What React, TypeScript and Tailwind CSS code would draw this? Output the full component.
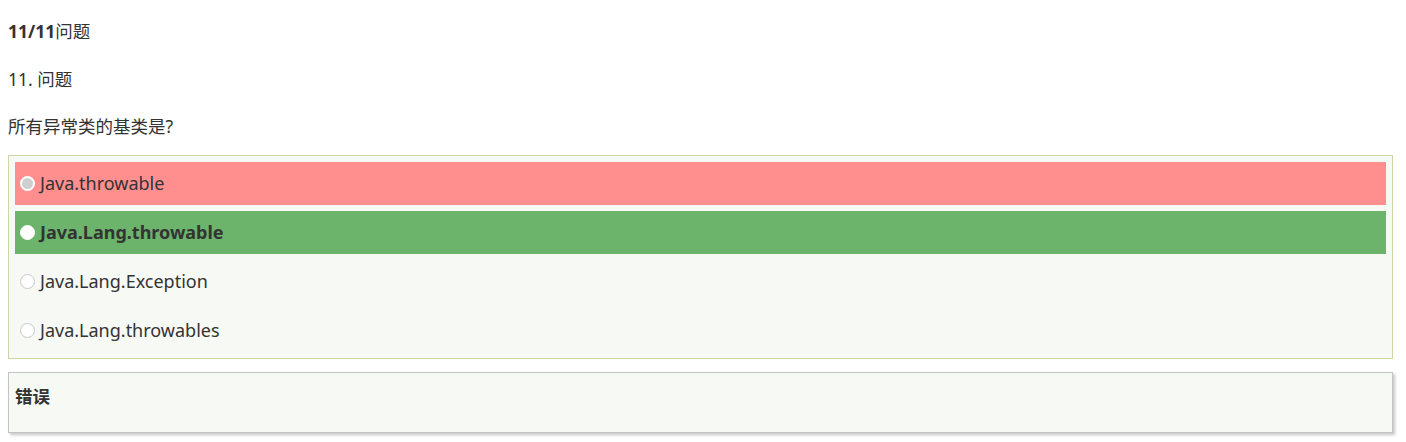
import React from "react";

const options = [
  { label: "Java.throwable", state: "wrong" },
  { label: "Java.Lang.throwable", state: "correct" },
  { label: "Java.Lang.Exception", state: "none" },
  { label: "Java.Lang.throwables", state: "none" },
];

function Radio({ state }: { state: string }) {
  if (state === "wrong")
    return <span className="inline-block w-[15px] h-[15px] rounded-full bg-[#cfcfcf] border-2 border-white shrink-0" />;
  if (state === "correct")
    return <span className="inline-block w-[15px] h-[15px] rounded-full bg-white border border-white shrink-0" />;
  return <span className="inline-block w-[15px] h-[15px] rounded-full bg-white border border-[#c8c8c8] shrink-0" />;
}

export default function App() {
  return (
    <div
      className="bg-white text-[#333] pl-2 pr-[13px] pt-[19px] pb-[9px]"
      style={{ fontFamily: "'Noto Sans', 'Noto Sans CJK SC', sans-serif" }}
    >
      <p className="text-[17.5px] leading-[24px] h-[24px]"><b>11/11</b>问题</p>
      <p className="text-[17.5px] leading-[24px] h-[24px] mt-[24px]">11. 问题</p>
      <p className="text-[17.5px] leading-[24px] h-[24px] mt-[23px]">所有异常类的基类是?</p>
      <div className="mt-[17px] border border-[#cad6a6] bg-[#f7f9f4] p-[6px] flex flex-col gap-[6px]">
        {options.map((o) => (
          <div
            key={o.label}
            className={
              "h-[43px] flex items-center gap-[5px] pl-[5px] text-[18px] " +
              (o.state === "wrong" ? "bg-[#ff8f8f]" : o.state === "correct" ? "bg-[#6cb36c] font-bold" : "")
            }
          >
            <Radio state={o.state} />
            <span>{o.label}</span>
          </div>
        ))}
      </div>
      <div className="mt-[13px] border border-[#c3c3c3] bg-[#f7f9f4] shadow-[2px_2px_3px_#c6c6c6] h-[61px] px-[6px] pt-[11px]">
        <b className="text-[17.5px] leading-[24px] block">错误</b>
      </div>
    </div>
  );
}
